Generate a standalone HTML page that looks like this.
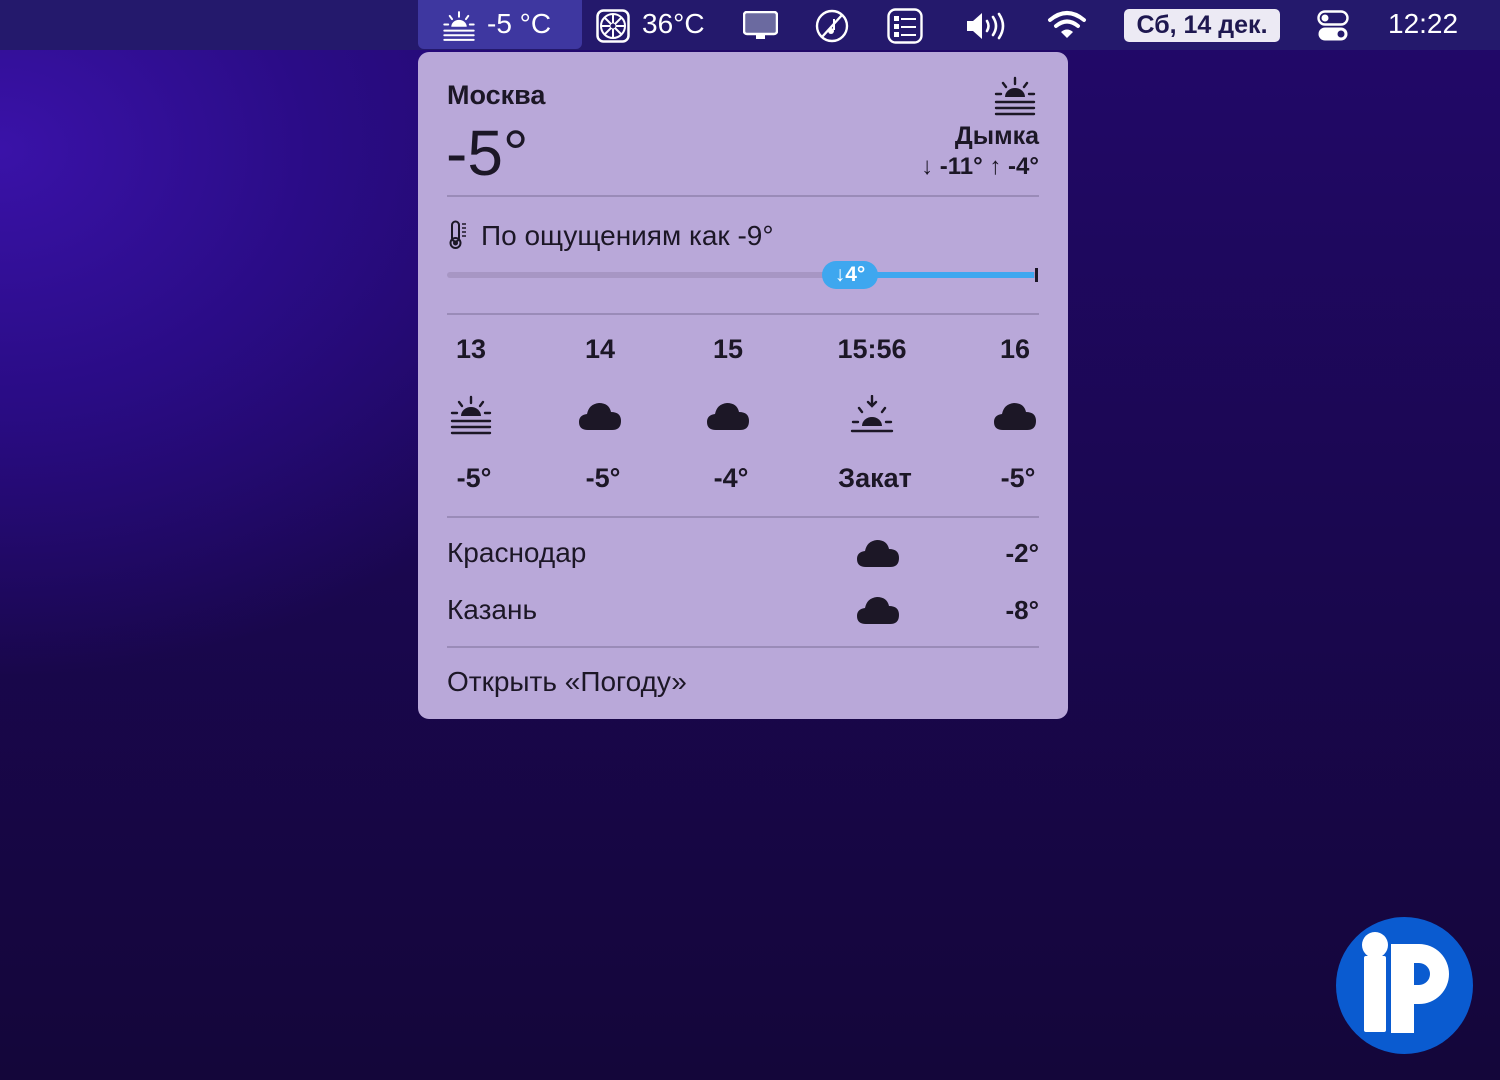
<!DOCTYPE html>
<html><head><meta charset="utf-8"><style>
*{margin:0;padding:0;box-sizing:border-box}
body{width:1500px;height:1080px;overflow:hidden;position:relative;font-family:"Liberation Sans",sans-serif;
background:radial-gradient(ellipse 900px 700px at 0px 150px,#3a12a8 0%,#2a0c86 35%,transparent 75%),linear-gradient(180deg,#22086a 0%,#1a0750 50%,#14063a 100%);}
.bar{position:absolute;left:0;top:0;width:1500px;height:50px;background:#24196c;color:#fff;}
.bar .t{position:absolute;top:8px;font-size:28px;color:#fff}
.hl{position:absolute;left:418px;top:0;width:164px;height:49px;background:#3e37a0;border-radius:0 0 6px 6px}
.date{position:absolute;left:1124px;top:9px;width:156px;height:33px;background:#eceaf4;border-radius:5px;color:#1e1850;font-weight:bold;font-size:25px;text-align:center;line-height:33px}
.panel{position:absolute;left:418px;top:52px;width:650px;height:667px;background:#b9a8d9;border-radius:11px;color:#1c1726}
.p{position:absolute}
.hr{position:absolute;left:29px;width:592px;height:2px;background:#9a8bb8}
.col{position:absolute;top:282px;width:120px;text-align:center;font-size:27px}
.col .h{font-weight:bold;font-size:27px}
.col svg{display:block;margin:30px auto 0}
.col .v{margin-top:28px;font-weight:bold;font-size:27px;padding-left:6px}
</style></head><body>
<svg width="0" height="0" style="position:absolute"><defs>
<symbol id="cloud" viewBox="0 0 44 30"><path d="M10 29 Q1 29 1 21 Q1 14 9 13 Q11 3 21 2 Q31 2 33 11 Q43 11 43 20 Q43 29 34 29 Z" fill="#1c1726"/></symbol>
<symbol id="haze" viewBox="0 0 44 40"><g stroke="#1c1726" stroke-width="2.4" fill="none" stroke-linecap="round"><path d="M22 2v6M10 7l3 4M34 7l-3 4M3 18h5M36 18h5M3 26h38M3 32h38M3 38h38"/></g><path d="M12 21a10 9 0 0 1 20 0z" fill="#1c1726"/></symbol>
<symbol id="sunset" viewBox="0 0 44 40"><g stroke="#1c1726" stroke-width="2.4" fill="none" stroke-linecap="round"><path d="M22 1v10M18 7l4 4 4-4M9 13l3 4M35 13l-3 4M3 27h5M36 27h5M2 36h40"/></g><path d="M12 31a10 9 0 0 1 20 0z" fill="#1c1726"/></symbol>
</defs></svg>
<div class="bar">
<div class="hl"></div>
<svg style="position:absolute;left:442px;top:10px" width="34" height="32" viewBox="0 0 44 40"><g stroke="#fff" stroke-width="2.6" fill="none" stroke-linecap="round"><path d="M22 2v6M10 7l3 4M34 7l-3 4M3 18h5M36 18h5M3 26h38M3 32h38M3 38h38"/></g><path d="M12 21a10 9 0 0 1 20 0z" fill="#fff"/></svg>
<div class="t" style="left:487px">-5 °C</div>
<svg style="position:absolute;left:596px;top:9px" width="34" height="34" viewBox="0 0 34 34"><rect x="1.5" y="1.5" width="31" height="31" rx="6" fill="none" stroke="#fff" stroke-width="2.5"/><circle cx="17" cy="17" r="12" fill="none" stroke="#fff" stroke-width="2"/><g stroke="#fff" stroke-width="2"><path d="M17 5v24M5 17h24M8.5 8.5l17 17M25.5 8.5l-17 17"/></g><circle cx="17" cy="17" r="3" fill="#24196c" stroke="#fff"/></svg>
<div class="t" style="left:642px">36°C</div>
<svg style="position:absolute;left:743px;top:11px" width="35" height="30" viewBox="0 0 35 30"><rect x="1" y="1" width="33" height="22" rx="3" fill="#6b6aa0" stroke="#fff" stroke-width="2.5"/><rect x="13" y="23" width="9" height="5" fill="#fff"/></svg>
<svg style="position:absolute;left:815px;top:9px" width="34" height="34" viewBox="0 0 34 34"><circle cx="17" cy="17" r="15" fill="none" stroke="#fff" stroke-width="2.4"/><path d="M7 28L27 6" stroke="#fff" stroke-width="2.4"/><path d="M19 10v11" stroke="#fff" stroke-width="2"/><circle cx="16" cy="22" r="3" fill="#fff"/></svg>
<svg style="position:absolute;left:887px;top:8px" width="36" height="36" viewBox="0 0 36 36"><rect x="1.5" y="1.5" width="33" height="33" rx="7" fill="none" stroke="#fff" stroke-width="2.4"/><g fill="#fff"><rect x="7" y="8" width="5" height="5"/><rect x="7" y="16" width="5" height="5"/><rect x="7" y="24" width="5" height="5"/><rect x="14" y="10" width="15" height="2"/><rect x="14" y="18" width="15" height="2"/><rect x="14" y="26" width="15" height="2"/></g></svg>
<svg style="position:absolute;left:965px;top:11px" width="44" height="30" viewBox="0 0 44 30"><path d="M2 10h6l9-8v26l-9-8H2z" fill="#fff"/><g fill="none" stroke="#fff" stroke-width="2.6" stroke-linecap="round"><path d="M22 10q3 5 0 10M28 6q6 9 0 18M34 3q8 12 0 24"/></g></svg>
<svg style="position:absolute;left:1047px;top:10px" width="40" height="30" viewBox="0 0 40 30"><g fill="none" stroke="#fff" stroke-width="4" stroke-linecap="round"><path d="M3 10q17-14 34 0M9 16q11-9 22 0"/></g><path d="M14 22q6-5 12 0l-6 6z" fill="#fff"/></svg>
<div class="date">Сб, 14 дек.</div>
<svg style="position:absolute;left:1317px;top:10px" width="32" height="32" viewBox="0 0 32 32"><rect x="1.5" y="1.5" width="29" height="13" rx="6.5" fill="none" stroke="#fff" stroke-width="2.4"/><circle cx="8" cy="8" r="3.5" fill="#fff"/><rect x="1.5" y="17.5" width="29" height="13" rx="6.5" fill="#fff"/><circle cx="24" cy="24" r="3.5" fill="#24196c"/></svg>
<div class="t" style="left:1388px">12:22</div>
</div>

<div class="panel">
<div class="p" style="left:29px;top:28px;font-size:27px;font-weight:bold">Москва</div>
<div class="p" style="left:28px;top:64px;font-size:64px;font-weight:300">-5°</div>
<svg class="p" style="left:575px;top:24px" width="44" height="40"><use href="#haze"/></svg>
<div class="p" style="right:29px;top:70px;font-size:25px;font-weight:bold">Дымка</div>
<div class="p" style="right:29px;top:101px;font-size:24px;font-weight:bold">↓ -11° ↑ -4°</div>
<div class="hr" style="top:143px"></div>
<svg class="p" style="left:31px;top:168px" width="18" height="30" viewBox="0 0 18 30"><rect x="3" y="1.5" width="7" height="20" rx="3.5" fill="none" stroke="#1c1726" stroke-width="2"/><circle cx="6.5" cy="23" r="5" fill="none" stroke="#1c1726" stroke-width="2"/><circle cx="6.5" cy="23" r="2.5" fill="#1c1726"/><g stroke="#1c1726" stroke-width="1.5"><path d="M13 4h4M13 8h4M13 12h4M13 16h4"/></g></svg>
<div class="p" style="left:63px;top:168px;font-size:28px">По ощущениям как -9°</div>
<div class="p" style="left:29px;top:220px;width:590px;height:6px;border-radius:3px;background:#a796c4"></div>
<div class="p" style="left:440px;top:220px;width:176px;height:6px;background:#3ea7ef"></div>
<div class="p" style="left:404px;top:209px;width:56px;height:28px;border-radius:14px;background:#3ea7ef;color:#fff;font-weight:bold;font-size:21px;text-align:center;line-height:28px">↓4°</div>
<div class="p" style="left:617px;top:216px;width:3px;height:14px;background:#1c1726"></div>
<div class="hr" style="top:261px"></div>
<div class="col" style="left:-7px"><div class="h">13</div><svg width="44" height="40"><use href="#haze"/></svg><div class="v">-5°</div></div>
<div class="col" style="left:122px"><div class="h">14</div><svg width="44" height="40" viewBox="0 0 44 40"><use href="#cloud" y="6" width="44" height="30"/></svg><div class="v">-5°</div></div>
<div class="col" style="left:250px"><div class="h">15</div><svg width="44" height="40" viewBox="0 0 44 40"><use href="#cloud" y="6" width="44" height="30"/></svg><div class="v">-4°</div></div>
<div class="col" style="left:394px"><div class="h">15:56</div><svg width="44" height="40"><use href="#sunset"/></svg><div class="v">Закат</div></div>
<div class="col" style="left:537px"><div class="h">16</div><svg width="44" height="40" viewBox="0 0 44 40"><use href="#cloud" y="6" width="44" height="30"/></svg><div class="v">-5°</div></div>
<div class="hr" style="top:464px"></div>
<div class="p" style="left:29px;top:485px;font-size:28px">Краснодар</div>
<svg class="p" style="left:438px;top:486px" width="44" height="30"><use href="#cloud"/></svg>
<div class="p" style="right:29px;top:486px;font-size:26px;font-weight:bold">-2°</div>
<div class="p" style="left:29px;top:542px;font-size:28px">Казань</div>
<svg class="p" style="left:438px;top:543px" width="44" height="30"><use href="#cloud"/></svg>
<div class="p" style="right:29px;top:543px;font-size:26px;font-weight:bold">-8°</div>
<div class="hr" style="top:594px"></div>
<div class="p" style="left:29px;top:614px;font-size:28px">Открыть «Погоду»</div>
</div>

<div style="position:absolute;left:1336px;top:917px;width:137px;height:137px;border-radius:50%;background:#0a5bd0"></div>
<div style="position:absolute;left:1364px;top:956px;width:22px;height:76px;background:#fff;border-radius:2px"></div>
<div style="position:absolute;left:1362px;top:932px;width:26px;height:26px;background:#fff;border-radius:50%"></div>
<svg style="position:absolute;left:1391px;top:944px" width="70" height="90" viewBox="0 0 70 90"><path d="M0 0h28a30 30 0 0 1 0 60h-5v29H0z M23 19v22h5a11 11 0 0 0 0-22z" fill="#fff" fill-rule="evenodd"/></svg>
</body></html>
